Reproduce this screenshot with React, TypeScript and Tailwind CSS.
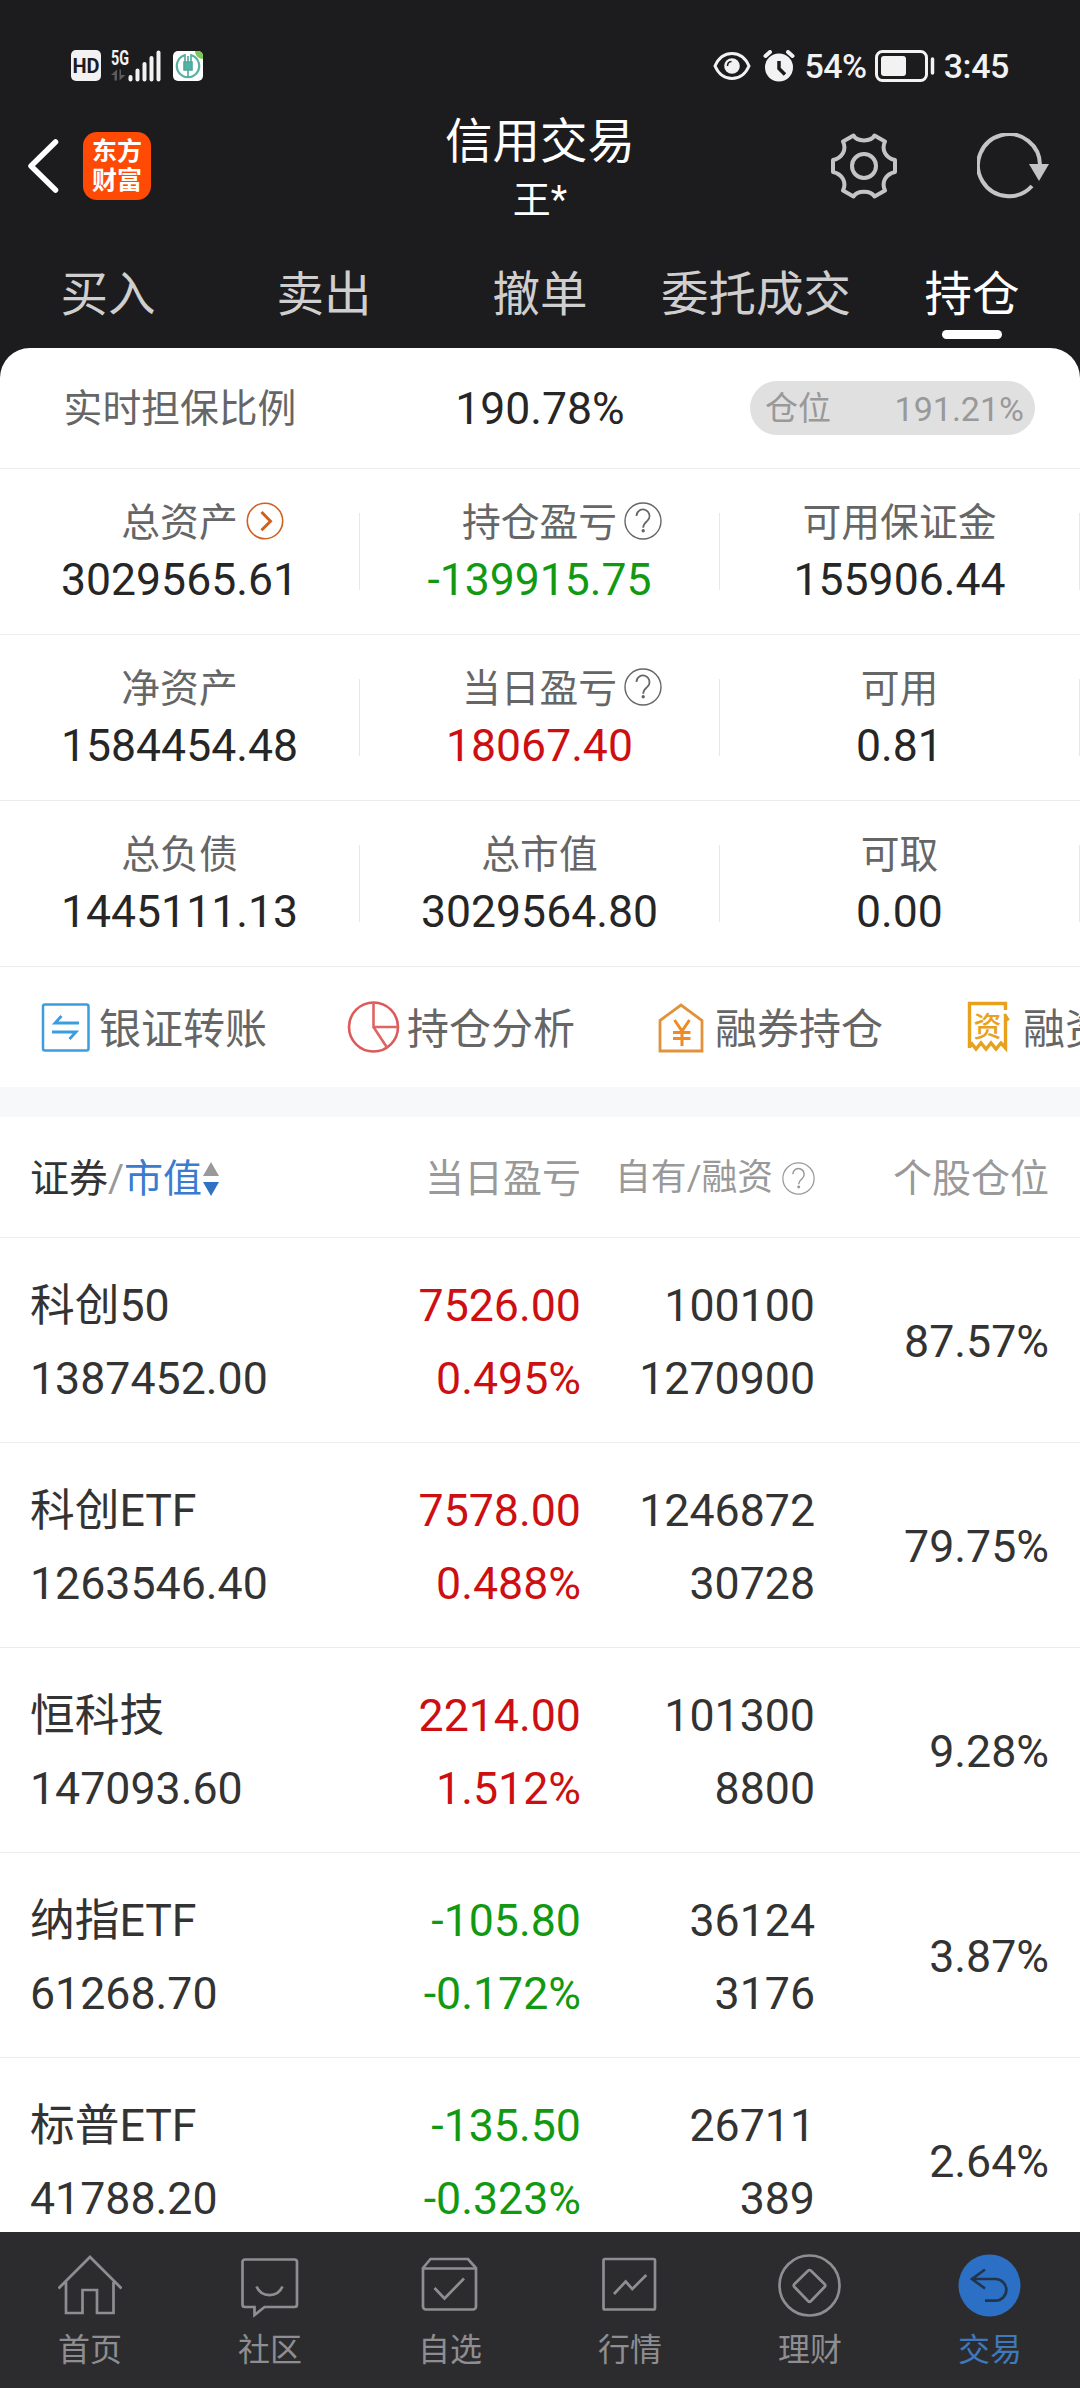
import type { ReactNode } from "react";
import clsx from "clsx";

const tabs = ["买入", "卖出", "撤单", "委托成交", "持仓"];

type Tone = "up" | "down" | "plain";

const toneClass: Record<Tone, string> = {
    up: "text-[#cd0f12]",
    down: "text-[#129912]",
    plain: "text-[#262626]",
};

type Stat = { label: string; value: string; tone?: Tone; icon?: "more" | "help" };

const stats: Stat[][] = [
    [
        { label: "总资产", value: "3029565.61", icon: "more" },
        { label: "持仓盈亏", value: "-139915.75", tone: "down", icon: "help" },
        { label: "可用保证金", value: "155906.44" },
    ],
    [
        { label: "净资产", value: "1584454.48" },
        { label: "当日盈亏", value: "18067.40", tone: "up", icon: "help" },
        { label: "可用", value: "0.81" },
    ],
    [
        { label: "总负债", value: "1445111.13" },
        { label: "总市值", value: "3029564.80" },
        { label: "可取", value: "0.00" },
    ],
];

const holdings: { name: string; value: string; profit: string; rate: string; tone: Tone; own: string; margin: string; share: string }[] = [
    { name: "科创50", value: "1387452.00", profit: "7526.00", rate: "0.495%", tone: "up", own: "100100", margin: "1270900", share: "87.57%" },
    { name: "科创ETF", value: "1263546.40", profit: "7578.00", rate: "0.488%", tone: "up", own: "1246872", margin: "30728", share: "79.75%" },
    { name: "恒科技", value: "147093.60", profit: "2214.00", rate: "1.512%", tone: "up", own: "101300", margin: "8800", share: "9.28%" },
    { name: "纳指ETF", value: "61268.70", profit: "-105.80", rate: "-0.172%", tone: "down", own: "36124", margin: "3176", share: "3.87%" },
    { name: "标普ETF", value: "41788.20", profit: "-135.50", rate: "-0.323%", tone: "down", own: "26711", margin: "389", share: "2.64%" },
];

function HelpIcon({ className }: { className?: string }) {
    return (
        <svg viewBox="0 0 38 38" className={className} fill="none" stroke="currentColor" strokeWidth="1.4">
            <circle cx="19" cy="19" r="18" />
            <path d="M12.500 14a6.500 6.500 0 1 1 11 4.700c-2.700 2.400-4.300 3.500-4.300 7" strokeWidth="1.700" />
            <circle cx="19.200" cy="28.800" r="1" fill="currentColor" />
        </svg>
    );
}

function MoreIcon({ className }: { className?: string }) {
    return (
        <svg viewBox="0 0 38 38" className={className} fill="none" stroke="#d0601f">
            <circle cx="19" cy="19" r="17.700" strokeWidth="1.600" />
            <path d="M15.500 10l9 9.300-9 9" strokeWidth="3" />
        </svg>
    );
}

function StatusBar() {
    return (
        <div className="flex h-[112px] items-center pl-[71px] pr-[71px] pt-[19px] text-[#f2f2f2]">
            <div className="flex h-[31px] w-[30px] items-center justify-center rounded-[5px] bg-[#f2f2f2] font-['Roboto'] text-[20px] font-bold leading-none text-[#1c1c1e]">
                HD
            </div>
            <svg viewBox="0 0 52 34" className="ml-[10px] h-[34px] w-[52px] overflow-visible" fill="#f2f2f2">
                <text x="0" y="16" fontFamily="Roboto" fontWeight="700" fontSize="20" textLength="18" lengthAdjust="spacingAndGlyphs">5G</text>
                <path d="M0 26l6-5.500v11H3.500V26zM14.500 26l-6 5.500v-11H10V26z" fill="#5c5c5e" />
                <rect x="17.500" y="26" width="4" height="6.500" rx="2" />
                <rect x="24.500" y="19.500" width="4" height="13" rx="2" />
                <rect x="31.500" y="13" width="4" height="19.500" rx="2" />
                <rect x="38.500" y="7" width="4" height="25.500" rx="2" />
                <rect x="45.500" y="1.500" width="4" height="31" rx="2" />
            </svg>
            <svg viewBox="0 0 30 30" className="ml-[10px] h-[30px] w-[30px]" fill="none">
                <rect width="30" height="30" rx="5" fill="#fff" />
                <path d="M11.500 4.300a11.200 11.200 0 1 0 7 0" stroke="#58b0a2" strokeWidth="2.200" />
                <path d="M11 11h8v8h-8zM12 3v9M18 3v9M15 5v6M15 19v7" stroke="#4fa79a" strokeWidth="1.600" fill="#4fb3a5" />
                <path d="M22 0h3a5 5 0 0 1 5 5v3a8 8 0 0 1-8-8z" fill="#7cc653" />
            </svg>
            <div className="ml-auto flex items-center">
                <svg viewBox="0 0 38 30" className="h-[30px] w-[38px]" fill="none" stroke="#f2f2f2" strokeWidth="3">
                    <path d="M2 15C6 6 12 2.500 19 2.500S32 6 36 15C32 24 26 27.500 19 27.500S6 24 2 15z" />
                    <circle cx="19" cy="15" r="7.800" fill="#f2f2f2" stroke="none" />
                    <path d="M14.500 15a4.500 4.500 0 0 1 4-4.500" stroke="#1c1c1e" strokeWidth="1.600" />
                </svg>
                <svg viewBox="0 0 32 32" className="ml-[12px] h-[32px] w-[32px]" fill="#f2f2f2">
                    <circle cx="16" cy="17.500" r="14" />
                    <path d="M2.500 6l4.500-4M29.500 6L25 2" stroke="#f2f2f2" strokeWidth="4" strokeLinecap="round" />
                    <path d="M16 11v7.500l6 6" stroke="#1c1c1e" strokeWidth="3.500" fill="none" />
                </svg>
                <span className="ml-[9px] font-['Roboto'] text-[34px] font-medium leading-none tracking-[-0.5px]">54%</span>
                <svg viewBox="0 0 60 32" className="ml-[8px] h-[32px] w-[60px]" fill="none" stroke="#f2f2f2">
                    <rect x="1.500" y="1.500" width="50" height="29" rx="6" strokeWidth="3" />
                    <rect x="6" y="6" width="25" height="20" rx="3" fill="#f2f2f2" stroke="none" />
                    <path d="M57.500 9v14" strokeWidth="3.500" strokeLinecap="round" />
                </svg>
                <span className="ml-[9px] font-['Roboto'] text-[34px] font-medium leading-none tracking-[-0.4px]">3:45</span>
            </div>
        </div>
    );
}

function TitleBar() {
    return (
        <div className="flex h-[120px] items-center px-[27px] pb-[12px]">
            <div className="flex w-[290px] items-center">
                <svg viewBox="0 0 32 54" className="h-[54px] w-[32px]" fill="none" stroke="#fff" strokeWidth="5.500" strokeLinecap="round" strokeLinejoin="round">
                    <path d="M28.500 3L4 27l24.500 24" />
                </svg>
                <div className="ml-[24px] flex h-[68px] w-[68px] flex-col items-center justify-center rounded-[14px] bg-[#ff4a05] text-[25px] font-bold leading-[29px] text-white">
                    <span>东方</span>
                    <span>财富</span>
                </div>
            </div>
            <div className="flex flex-1 flex-col items-center pt-[5px] text-white">
                <span className="text-[47.500px] leading-[60px]">信用交易</span>
                <span className="pt-[3px] text-[38px] leading-[50px]">王*</span>
            </div>
            <div className="flex w-[290px] items-center justify-end gap-[80px] pr-[2px]">
                <svg viewBox="0 0 66 66" className="h-[66px] w-[66px]" fill="none" stroke="#c4c4c4" strokeWidth="4" strokeLinejoin="round">
                    <path d="M22.500 2.500C26 9 40 9 43.500 2.500L54 8.500C50 17 55 25 64 27V39C55 41 50 49 54 57.500L43.500 63.500C40 57 26 57 22.500 63.500L12 57.500C16 49 11 41 2 39V27C11 25 16 17 12 8.500Z" />
                    <circle cx="33" cy="33" r="12" />
                </svg>
                <svg viewBox="0 0 74 66" className="h-[66px] w-[74px]" fill="none" stroke="#c4c4c4" strokeWidth="4">
                    <path d="M55 53A31 31 0 1 1 63 33" />
                    <path d="M52 31h20L62 48z" fill="#c4c4c4" stroke="none" />
                </svg>
            </div>
        </div>
    );
}

function Tabs({ active }: { active: string }) {
    return (
        <div className="grid h-[116px] grid-cols-5">
            {tabs.map((tab) => (
                <div key={tab} className="flex flex-col items-center pt-[28px]">
                    <span className={clsx("whitespace-nowrap text-[47.500px] leading-[70px]", tab === active ? "text-white" : "text-[#cfcfcf]")}>
                        {tab}
                    </span>
                    {tab === active && <span className="h-[9px] w-[60px] rounded-full bg-white" />}
                </div>
            ))}
        </div>
    );
}

function StatCell({ label, value, tone = "plain", icon }: Stat) {
    return (
        <div className="flex h-[165px] items-center">
            <div className="flex flex-1 flex-col items-center pt-[2px]">
                <span className="relative text-[38.800px] leading-[54px] text-[#666]">
                    {label}
                    {icon === "more" && <MoreIcon className="absolute left-full top-[6px] ml-[8px] h-[38px] w-[38px]" />}
                    {icon === "help" && <HelpIcon className="absolute left-full top-[6px] ml-[7px] h-[38px] w-[38px]" />}
                </span>
                <span className={clsx("text-[44.500px] leading-[60px]", toneClass[tone])}>{value}</span>
            </div>
            <span className="h-[77px] w-px bg-[#e8e8e8]" />
        </div>
    );
}

function Summary() {
    return (
        <div className="overflow-hidden rounded-t-[30px] bg-white">
            <div className="grid h-[120px] grid-cols-3 items-center">
                <span className="pt-[3px] text-center text-[38.800px] text-[#666]">实时担保比例</span>
                <span className="pt-[3px] text-center text-[44.500px] text-[#262626]">190.78%</span>
                <div className="ml-[30px] flex h-[54px] w-[285px] items-center justify-between rounded-full bg-[#e0e0e0] pl-[15px] pr-[11px] pt-[2px] text-[#999]">
                    <span className="text-[33px]">仓位</span>
                    <span className="text-[34px]">191.21%</span>
                </div>
            </div>
            {stats.map((row) => (
                <div key={row[0].label} className="grid grid-cols-3 border-t border-[#ececec]">
                    {row.map((stat) => (
                        <StatCell key={stat.label} {...stat} />
                    ))}
                </div>
            ))}
        </div>
    );
}

function Action({ label, children }: { label: string; children: ReactNode }) {
    return (
        <div className="flex w-[308px] shrink-0 items-center">
            <svg viewBox="0 0 54 54" className="h-[54px] w-[54px]" fill="none">
                {children}
            </svg>
            <span className="ml-[7px] whitespace-nowrap pt-[5px] text-[42px] text-[#666]">{label}</span>
        </div>
    );
}

function Actions() {
    return (
        <div className="flex h-[121px] items-center overflow-hidden border-t border-[#ececec] bg-white pl-[38px]">
            <Action label="银证转账">
                <rect x="5" y="4.500" width="45.500" height="46" rx="2" stroke="#3b9de0" strokeWidth="2.500" />
                <path d="M41 23H17l6.500-7M14 32h24l-6.500 7" stroke="#3b9de0" strokeWidth="2.800" />
            </Action>
            <Action label="持仓分析">
                <circle cx="27.500" cy="27" r="24.500" stroke="#dc5a5a" strokeWidth="2.600" />
                <path d="M27.500 2.500V27H52M27.500 27l13.500 20.500" stroke="#e06464" strokeWidth="2.600" />
            </Action>
            <Action label="融券持仓">
                <path d="M6 51V20.500L27 5l21 15.500V51z" stroke="#e2913c" strokeWidth="2.800" />
                <path d="M20.500 20L28 31l7.500-11M28 31v15M19 32.500h17.500M19 38.500h17.500" stroke="#f08a24" strokeWidth="3" />
            </Action>
            <Action label="融资">
                <path d="M7.500 48V3.500h36V10M43.500 16v32l-4.500-5-5 6-5-6-5 6-5-6-5 6-4-5-2.500 3" stroke="#e8a11c" strokeWidth="3.400" />
                <path d="M42.500 14l4 6.500" stroke="#e8a11c" strokeWidth="3" />
                <text x="11.500" y="36.500" fontSize="28" fontWeight="500" fill="#e8a11c" fontFamily="Noto Sans CJK SC">资</text>
            </Action>
        </div>
    );
}

const columns = "grid grid-cols-[281px_270px_234px_1fr] pl-[30px] pr-[31px]";

function Holdings() {
    return (
        <div className="min-h-0 flex-1 overflow-hidden bg-white">
            <div className={clsx(columns, "h-[120px] items-center pt-[4px] text-[39px] text-[#999]")}>
                <div className="flex items-center whitespace-nowrap">
                    <span className="text-[#333]">证券</span>
                    <span>/</span>
                    <span className="text-[#3a7bd0]">市值</span>
                    <svg viewBox="0 0 16 34" className="ml-px h-[34px] w-[16px]">
                        <path d="M8 0l8 14H0z" fill="#999" />
                        <path d="M8 34l8-14H0z" fill="#3073c4" />
                    </svg>
                </div>
                <span className="text-right">当日盈亏</span>
                <div className="flex items-center justify-end text-[35.800px]">
                    自有/融资
                    <HelpIcon className="-mt-[2px] ml-[9px] h-[33px] w-[33px]" />
                </div>
                <span className="text-right">个股仓位</span>
            </div>
            {holdings.map((item) => (
                <div key={item.name} className={clsx(columns, "h-[205px] items-center border-t border-[#ececec] pt-[5px] text-[44.700px] leading-[73px] text-[#333]")}>
                    <div className="flex flex-col">
                        <span>{item.name}</span>
                        <span>{item.value}</span>
                    </div>
                    <div className={clsx("flex flex-col text-right", toneClass[item.tone])}>
                        <span>{item.profit}</span>
                        <span>{item.rate}</span>
                    </div>
                    <div className="flex flex-col text-right">
                        <span>{item.own}</span>
                        <span>{item.margin}</span>
                    </div>
                    <span className="text-right">{item.share}</span>
                </div>
            ))}
        </div>
    );
}

function NavItem({ label, active, children }: { label: string; active?: boolean; children: ReactNode }) {
    return (
        <div className={clsx("flex flex-col items-center pt-[22px]", active ? "text-[#3f78bd]" : "text-[#8e8e92]")}>
            <svg viewBox="0 0 64 64" className="h-[64px] w-[64px]" fill="none" stroke="currentColor" strokeWidth="2.700">
                {children}
            </svg>
            <span className="mt-[9px] text-[32px] leading-[46px]">{label}</span>
        </div>
    );
}

function BottomNav() {
    return (
        <div className="grid h-[156px] shrink-0 grid-cols-6 bg-[#2c2c2e]">
            <NavItem label="首页">
                <path d="M.5 34.500L32 3l31.500 31.500M8 28v31h16.500V36H39v23h16.500V28" />
            </NavItem>
            <NavItem label="社区">
                <path d="M7 5.500h49.500a2.500 2.500 0 0 1 2.500 2.500v42.500a2.500 2.500 0 0 1-2.500 2.500H26.500L16.500 61v-8H7a2.500 2.500 0 0 1-2.500-2.500V8A2.500 2.500 0 0 1 7 5.500z" />
                <path d="M18.500 32.500c5 11.500 21 11.500 26 0" />
            </NavItem>
            <NavItem label="自选">
                <path d="M5 14l7.500-9h37.500l8 9v38.500a3 3 0 0 1-3 3H8a3 3 0 0 1-3-3zM5 14.500h53M16.500 34l10 10.500 19.500-20" />
            </NavItem>
            <NavItem label="行情">
                <rect x="5.500" y="5" width="51.500" height="50.500" rx="1.500" />
                <path d="M16 40l11.700-12.500 6.600 7.500 14-14" />
            </NavItem>
            <NavItem label="理财">
                <circle cx="31.500" cy="31.500" r="30" />
                <path d="M30 16.800q1.500-1.600 3 0l13.500 13.200q1.500 1.500 0 3L33 47q-1.500 1.500-3 0L16.500 33q-1.500-1.500 0-3z" />
            </NavItem>
            <NavItem label="交易" active>
                <circle cx="31.500" cy="31.500" r="31" fill="#2b70c4" stroke="none" />
                <path d="M27 15.500L14 25l13 9.500M14 25h23.500a10.800 10.800 0 0 1 0 21.700H27" stroke="#22344c" />
            </NavItem>
        </div>
    );
}

export default function App() {
    return (
        <div className="flex h-[2388px] w-[1080px] flex-col overflow-hidden bg-[#1c1c1e] font-['Roboto','Noto_Sans_CJK_SC',sans-serif]">
            <StatusBar />
            <TitleBar />
            <Tabs active="持仓" />
            <Summary />
            <Actions />
            <div className="h-[30px] shrink-0 bg-[#f7f8fa]" />
            <Holdings />
            <BottomNav />
        </div>
    );
}
